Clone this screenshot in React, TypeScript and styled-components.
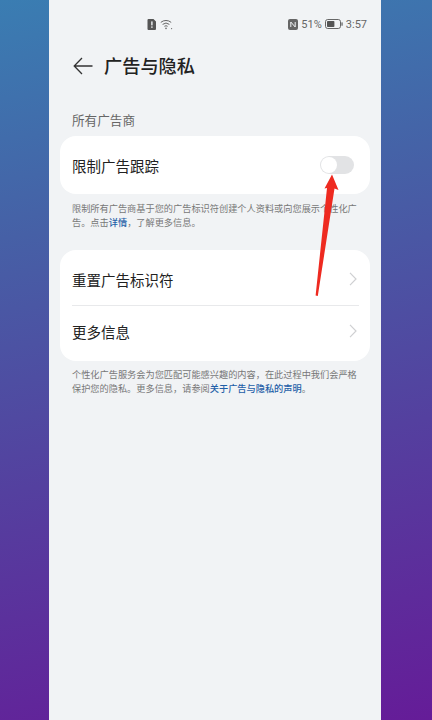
import styled, { createGlobalStyle } from "styled-components";
import { FC, ReactNode } from "react";

const FONT = `"Noto Sans CJK SC", "Noto Sans", sans-serif`;

const GlobalStyle = createGlobalStyle`
  html, body {
    margin: 0;
    padding: 0;
  }
  body {
    font-family: ${FONT};
  }
  * {
    box-sizing: border-box;
  }
`;

const Chevron: FC = () => (
  <ChevronIcon viewBox="0 0 8 14">
    <path d="M1 .8l6 6.2-6 6.2" fill="none" stroke="#cfd0d2" strokeWidth="1.2" />
  </ChevronIcon>
);

const NavRow: FC<{ children: ReactNode; divider?: boolean }> = ({ children, divider }) => (
  <NavItem divider={divider}>
    <RowLabel>{children}</RowLabel>
    <Chevron />
  </NavItem>
);

const App: FC = () => {
  return (
    <Page>
      <GlobalStyle />
      <Phone>
        <StatusBar>
          <StatusLeft>
            <svg width="10" height="11" viewBox="0 0 10 11">
              <path d="M1.5 0h5L9 2.5V10a1 1 0 0 1-1 1H1.5a1 1 0 0 1-1-1V1a1 1 0 0 1 1-1z" fill="#555" />
              <rect x="4.2" y="2.4" width="1.4" height="4" fill="#f1f3f5" />
              <rect x="4.2" y="7.4" width="1.4" height="1.4" fill="#f1f3f5" />
            </svg>
            <svg width="13" height="11" viewBox="0 0 13 11" fill="none" stroke="#666" strokeWidth="1">
              <path d="M.8 3.4a8 8 0 0 1 10.4 0" />
              <path d="M2.6 5.4a5.4 5.4 0 0 1 6.8 0" />
              <path d="M4.4 7.3a2.8 2.8 0 0 1 3.2 0" />
              <circle cx="6" cy="9.4" r=".8" fill="#666" stroke="none" />
              <circle cx="11.6" cy="9.6" r=".6" fill="#666" stroke="none" />
            </svg>
          </StatusLeft>
          <StatusRight>
            <svg width="10" height="11" viewBox="0 0 10 11">
              <rect width="10" height="11" rx="2" fill="#666" />
              <path d="M2.8 8V3l4.4 5V3" fill="none" stroke="#f1f3f5" strokeWidth="1" />
            </svg>
            <StatusText>51%</StatusText>
            <svg width="18" height="10" viewBox="0 0 18 10">
              <rect x=".5" y=".5" width="15" height="9" rx="2.2" fill="none" stroke="#666" />
              <rect x="2" y="2" width="7.4" height="6" rx=".8" fill="#555" />
              <rect x="16.4" y="3.2" width="1.3" height="3.6" rx=".6" fill="#666" />
            </svg>
            <StatusText>3:57</StatusText>
          </StatusRight>
        </StatusBar>

        <Header>
          <svg width="20" height="18" viewBox="0 0 20 18" fill="none" stroke="#333" strokeWidth="1.3">
            <path d="M9 1L1.2 9 9 17M1.2 9H19.5" />
          </svg>
          <Title>广告与隐私</Title>
        </Header>

        <SectionLabel>所有广告商</SectionLabel>

        <ToggleCard>
          <RowLabel>限制广告跟踪</RowLabel>
          <Switch>
            <Knob />
          </Switch>
        </ToggleCard>

        <Note>
          限制所有广告商基于您的广告标识符创建个人资料或向您展示个性化广告。点击<NoteLink>详情</NoteLink>，了解更多信息。
        </Note>

        <ListCard>
          <NavRow divider>重置广告标识符</NavRow>
          <NavRow>更多信息</NavRow>
        </ListCard>

        <Note tight>
          个性化广告服务会为您匹配可能感兴趣的内容，在此过程中我们会严格保护您的隐私。更多信息，请参阅<NoteLink>关于广告与隐私的声明</NoteLink>。
        </Note>

        <Arrow viewBox="0 0 30 130">
          <path d="M18 4.5L24.5 20 20.5 18.5 3.8 126 1.6 125.6 13 18 10.5 18.5z" fill="#ee2a20" />
        </Arrow>
      </Phone>
    </Page>
  );
};

const Page = styled.div`
  width: 432px;
  height: 720px;
  overflow: hidden;
  padding-left: 49px;
  background: linear-gradient(170deg, #3a7db2 0%, #4660a6 30%, #54409f 62%, #651c98 100%);
`;

const Phone = styled.main`
  position: relative;
  width: 332px;
  height: 720px;
  padding: 0 11px;
  background: #f1f3f5;
`;

const StatusBar = styled.div`
  height: 48px;
  display: flex;
  align-items: center;
  justify-content: space-between;
  padding: 0 3px 0 87px;
`;

const StatusLeft = styled.div`
  display: flex;
  align-items: center;
  gap: 3px;
`;

const StatusRight = styled.div`
  display: flex;
  align-items: center;
  gap: 3px;
`;

const StatusText = styled.span`
  font-family: "Roboto", sans-serif;
  font-size: 11px;
  color: #666;
`;

const Header = styled.header`
  height: 36px;
  display: flex;
  align-items: center;
  gap: 11px;
  padding-left: 13px;
`;

const Title = styled.h1`
  margin: 0;
  padding-bottom: 2px;
  font-size: 18.2px;
  font-weight: 500;
  color: #222;
`;

const SectionLabel = styled.div`
  margin-top: 27px;
  padding-left: 12px;
  height: 18px;
  line-height: 18px;
  font-size: 12.6px;
  color: #666;
`;

const ToggleCard = styled.section`
  margin-top: 7px;
  height: 58px;
  padding: 0 16px 0 12px;
  display: flex;
  align-items: center;
  justify-content: space-between;
  background: #fff;
  border-radius: 16px;
`;

const RowLabel = styled.span`
  font-size: 14.5px;
  color: #222;
`;

const Switch = styled.div`
  width: 34px;
  height: 18px;
  padding: 1px;
  border-radius: 9px;
  background: #e2e3e5;
`;

const Knob = styled.div`
  width: 16px;
  height: 16px;
  border-radius: 50%;
  background: #fff;
`;

const Note = styled.p<{ tight?: boolean }>`
  margin: ${({ tight }) => (tight ? "6px" : "7px")} 0 0;
  padding: 0 11px 0 12px;
  font-size: 9.2px;
  line-height: 14px;
  color: #777;
`;

const NoteLink = styled.span`
  color: #1f5fa8;
  font-weight: 500;
`;

const ListCard = styled.section`
  margin-top: 21px;
  padding: 0 11px 0 12px;
  background: #fff;
  border-radius: 16px;
`;

const NavItem = styled.div<{ divider?: boolean }>`
  height: ${({ divider }) => (divider ? "56px" : "55px")};
  padding: ${({ divider }) => (divider ? "3px 0 0" : "0 0 5px")};
  display: flex;
  align-items: center;
  justify-content: space-between;
  border-bottom: ${({ divider }) => (divider ? "1px solid #e8e9eb" : "none")};
`;

const ChevronIcon = styled.svg`
  width: 8px;
  height: 14px;
  margin-right: 2px;
`;

const Arrow = styled.svg`
  position: absolute;
  left: 265px;
  top: 170px;
  width: 30px;
  height: 130px;
`;

export default App;
